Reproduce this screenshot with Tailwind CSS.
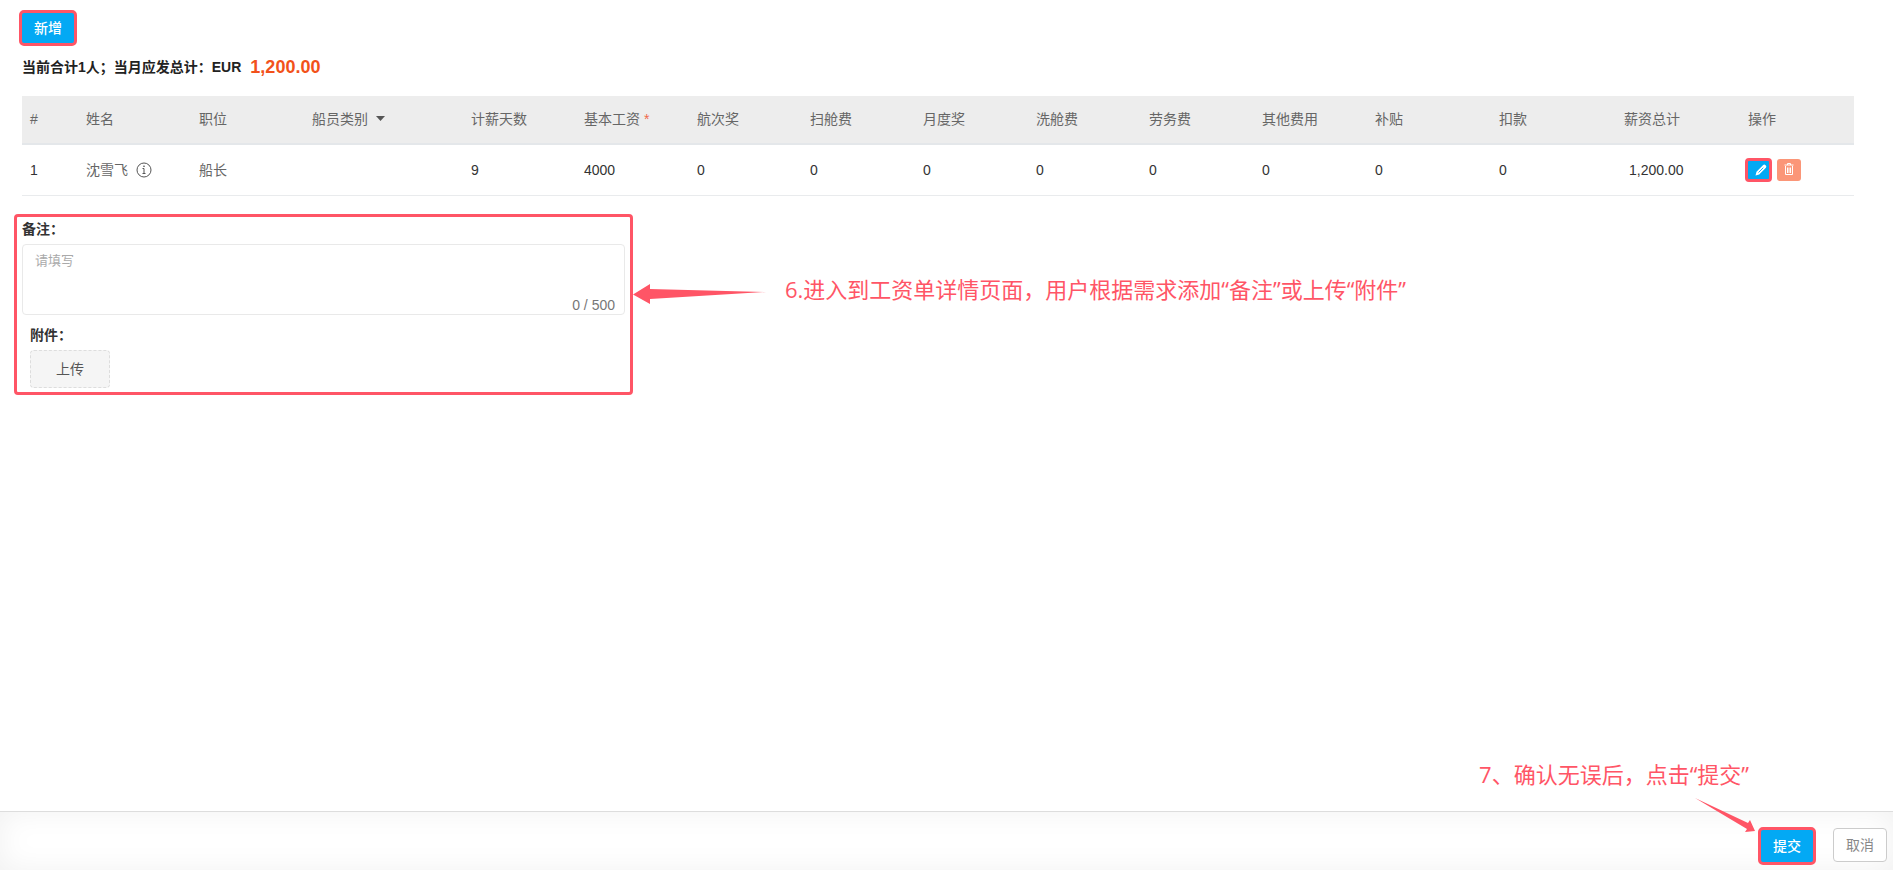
<!DOCTYPE html>
<html lang="zh-CN">
<head>
<meta charset="utf-8">
<title>工资单详情</title>
<script src="https://cdn.jsdelivr.net/npm/@tailwindcss/browser@4"></script>
</head>
<body class="flex min-h-screen flex-col bg-white font-['Liberation_Sans','Noto_Sans_CJK_SC',sans-serif] text-sm text-[#333]">
<main class="flex-1 pl-[22px] pr-[39px] pt-[10px]">
  <button type="button" class="-ml-[3px] flex h-9 w-[58px] items-center justify-center rounded-[5px] border-3 border-[#ff5566] bg-[#03a9f4] font-medium text-white">新增</button>
  <p class="mt-[7px] flex h-7 items-center font-bold text-[#222]"><span>当前合计1人；当月应发总计：EUR</span><span class="ml-[9px] text-lg text-[#f2511b]">1,200.00</span></p>

  <table class="mt-[15px] w-full table-fixed text-left">
    <colgroup>
      <col class="w-[56px]"><col class="w-[113px]"><col class="w-[113px]"><col class="w-[159px]"><col class="w-[113px]"><col class="w-[113px]"><col class="w-[113px]"><col class="w-[113px]"><col class="w-[113px]"><col class="w-[113px]"><col class="w-[113px]"><col class="w-[113px]"><col class="w-[124px]"><col class="w-[125px]"><col class="w-[124px]"><col class="w-[114px]">
    </colgroup>
    <thead>
      <tr class="h-[48px] border-b-2 border-[#e4e7ea] bg-[#ededed] text-[#666] *:px-2 *:pb-[2px] *:font-normal">
        <th>#</th><th>姓名</th><th>职位</th>
        <th><button type="button" class="flex items-center gap-2">船员类别 <svg class="h-[5px] w-[9px]" viewBox="0 0 9 5" fill="#555"><path d="M0 0h9L4.500 5z"/></svg></button></th>
        <th>计薪天数</th><th>基本工资 <span class="text-[#f0694a]">*</span></th><th>航次奖</th><th>扫舱费</th><th>月度奖</th><th>洗舱费</th><th>劳务费</th><th>其他费用</th><th>补贴</th><th>扣款</th><th>薪资总计</th><th>操作</th>
      </tr>
    </thead>
    <tbody>
      <tr class="h-[51px] border-b border-[#e9ebed] *:px-2">
        <td>1</td>
        <td class="text-[#666]"><span class="flex items-center gap-2">沈雪飞 <svg class="size-4" viewBox="0 0 16 16" fill="none" stroke="#555"><circle cx="8" cy="8" r="7"/><path d="M6.500 6.500h1.500v5M6.500 11.500h3"/><circle cx="8" cy="4.200" r=".4" fill="#555"/></svg></span></td>
        <td class="text-[#666]">船长</td><td></td><td>9</td><td>4000</td><td>0</td><td>0</td><td>0</td><td>0</td><td>0</td><td>0</td><td>0</td><td>0</td>
        <td><span class="pl-[5px]">1,200.00</span></td>
        <td><span class="-ml-[3px] flex items-center gap-[5px]">
          <button type="button" aria-label="编辑" class="flex h-6 w-[27px] items-center justify-center rounded border-3 border-[#ff5566] bg-[#03a9f4] pl-1"><svg class="size-3" viewBox="0 0 12 12"><path d="M.5 11.500l1-3.700L8.200 1.100Q9.300 0 10.600 1.300 12 2.700 10.900 3.800L4.200 10.500z" fill="#fff"/><path d="M3.500 8.500l4.800-4.800" stroke="#03a9f4" stroke-width=".9"/></svg></button>
          <button type="button" aria-label="删除" class="flex h-[22px] w-6 items-center justify-center rounded-[3px] bg-[#fb9678] pb-[2px]"><svg class="h-3 w-[10px]" viewBox="0 0 10 12" fill="none" stroke="#fff"><path d="M.5 2h9M3.500 2V.5h3V2M1.500 3v8.500h7V3M3.500 4.500V10M5 4.500V10M6.500 4.500V10"/></svg></button>
        </span></td>
      </tr>
    </tbody>
  </table>

  <div class="mt-[18px] flex items-start">
    <section class="-ml-2 w-[619px] shrink-0 rounded border-3 border-[#ff5566] px-[5px] pb-[4px]">
      <label for="remark" class="block h-[27px] font-bold leading-6">备注：</label>
      <div class="relative w-[603px]">
        <textarea id="remark" placeholder="请填写" class="block h-[71px] w-full resize-none rounded border border-[#e9e9e9] px-3 py-[6px] text-[13px] leading-5 placeholder:text-[#aaa]"></textarea>
        <span class="absolute bottom-0 right-[10px] leading-5 text-[#777]">0 / 500</span>
      </div>
      <div class="pl-2 pt-[8px]">
        <p class="h-[27px] font-bold leading-6">附件：</p>
        <button type="button" class="h-[38px] w-20 rounded border border-dashed border-[#ddd] bg-[#f5f5f5] text-[#555]">上传</button>
      </div>
    </section>
    <svg class="mt-[70px] h-5 w-[133px] shrink-0" viewBox="0 0 133 20" fill="#ff5566"><path d="M0 10.500L17 0v5L133 8 17 15v5z"/></svg>
    <p class="ml-[19px] mt-[59px] font-['Open_Sans','Noto_Sans_CJK_SC',sans-serif] text-[22px] leading-8 text-[#ff5566]">6.进入到工资单详情页面，用户根据需求添加“备注”或上传“附件”</p>
  </div>
</main>

<div class="flex flex-col items-end pr-[138px] text-[#ff5566]">
  <p class="mr-[6px] font-['Open_Sans','Noto_Sans_CJK_SC',sans-serif] text-[22px] leading-8">7、确认无误后，点击“提交”</p>
  <svg class="relative z-10 -mb-[21px] mt-2 h-[34px] w-[60px]" viewBox="0 0 60 34" fill="#ff5566"><path d="M0 0L53 25l2-3 5 11-10 1 2-3z"/></svg>
</div>
<footer class="flex h-[59px] items-start justify-end gap-[17px] border-t border-[#ddd] pr-[6px] pt-[15px] shadow-[inset_0_0_30px_rgba(0,0,0,0.06)]">
  <button type="button" class="h-[38px] w-[58px] rounded-[5px] border-3 border-[#ff5566] bg-[#03a9f4] font-medium text-white">提交</button>
  <button type="button" class="mt-px h-[34px] w-[54px] rounded border border-[#ccc] bg-white text-[#888]">取消</button>
</footer>
</body>
</html>
